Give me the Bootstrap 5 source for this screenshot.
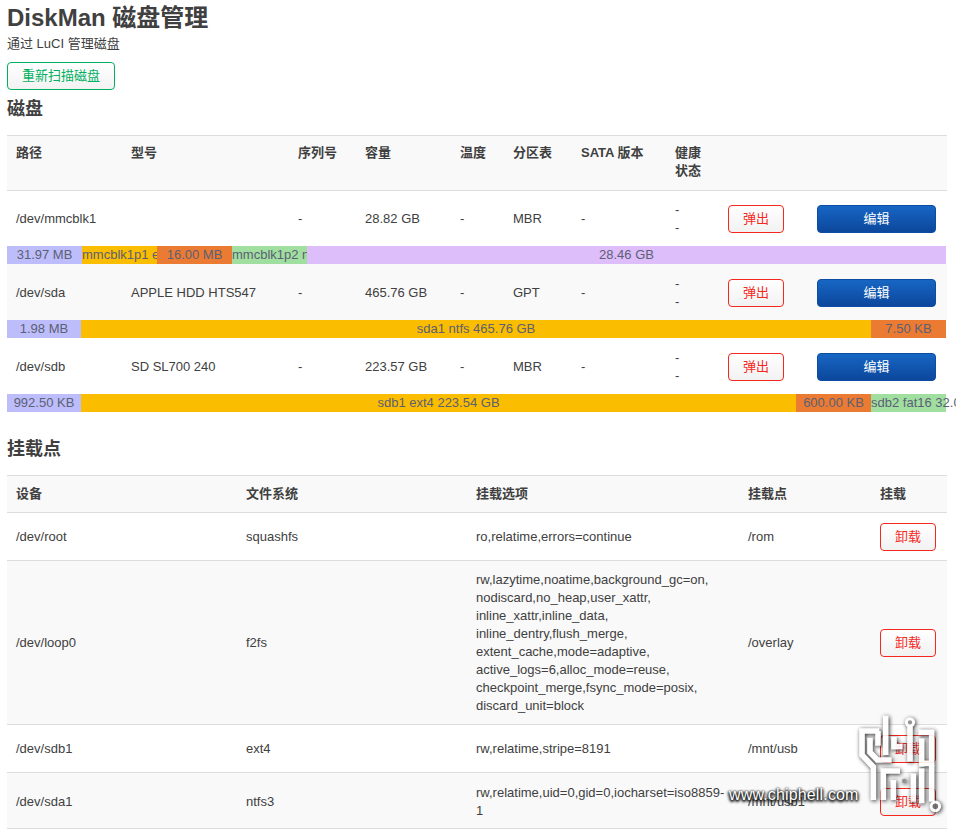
<!DOCTYPE html>
<html lang="zh-CN">
<head>
<meta charset="utf-8">
<title>DiskMan</title>
<link href="https://cdn.jsdelivr.net/npm/bootstrap@5.3.0/dist/css/bootstrap.min.css" rel="stylesheet">
<style>
html,body{overflow:hidden;height:829px}
body{font-family:"Liberation Sans","Noto Sans CJK SC",sans-serif;font-size:13px;line-height:18px;color:#404040;background:#fff;padding:0 9px 0 7px;position:relative}
.pg-title{font-size:24px;line-height:30px;font-weight:700;margin:0;padding-top:3px}
.pg-desc{margin:0;padding-top:1px;line-height:19px}
.act-btn{font-size:13px;line-height:18px;padding:4px 13px;border-radius:4px;background:linear-gradient(#fff,#f2f2f2);font-family:inherit}
.rescan{display:block;margin-top:9px;width:108px;height:28px;padding:0;border:1px solid #00b060;color:#00b060}
.sec-title{font-size:18px;line-height:22px;font-weight:700;margin:0}
.first-sec{margin-top:8px}
.second-sec{margin-top:26px}
.dt{table-layout:fixed;width:940px;margin:0;border-collapse:collapse;color:#404040;--bs-table-bg:transparent;font-size:13px;line-height:18px}
.dt th,.dt td{padding:9px 9px;border:0;border-top:1px solid #ddd;vertical-align:middle;font-weight:400;box-shadow:none;background:transparent;color:#404040}
.dt th{font-weight:700;vertical-align:top;background:#f9f9f9}
.dt tr.alt>td{background:#f9f9f9}
.disk-tbl{margin-top:15px}
.disk-tbl thead tr{height:55px}
.disk-tbl tbody tr.drow{height:55px}
.disk-tbl thead th{padding-top:8px;padding-bottom:10px}
.disk-tbl tr.drow td{border-top:1px solid #ddd;padding-top:10px;padding-bottom:8px}
.disk-tbl tr.barrow td{padding:0;border:0;height:18px}
.disk-tbl tr.barrow+tr.drow td{border-top:0}
.disk-tbl tr.barrow+tr.drow{height:56px}
.seg-bar{display:flex;width:939px;height:18px;line-height:18px}
.seg{flex:none;text-align:center;white-space:nowrap;position:relative}
.seg-blue{background:#bdbdfb}.seg-yel{background:#fbbd00}.seg-org{background:#eb7b33}.seg-grn{background:#a0dfa0}.seg-pur{background:#debdfb}
.seg-bar .seg{color:#5c6074}
.seg-nar{width:75px}
.eject{display:block;width:56px;height:28px;padding:0;border:1px solid #f5281e;color:#f5281e}
.edit{display:block;width:119px;height:28px;padding:0;border:1px solid #0d4ca3;color:#fff;background:linear-gradient(#1766c4,#0c479c)}
.mnt-tbl{margin-top:15px}
.mnt-tbl th{vertical-align:middle;padding-top:9px;padding-bottom:9px}
.mnt-tbl tbody td{padding-top:10px;padding-bottom:8px}
.mnt-tbl tr.mnt-2>td{border-bottom:1px solid #ddd;padding-top:10px;padding-bottom:7px}
.mnt-h1{height:37px}.mnt-r{height:48px}.mnt-l{height:164px}.mnt-2{height:56px}
.wm{position:absolute;left:722px;top:705px;width:234px;height:124px;pointer-events:none}
.wm-txt{position:absolute;left:7px;top:81px;font-size:16px;line-height:18px;color:#fff;text-shadow:0 0 2px #111,1px 1px 3px #111,-1px 1px 3px #111,0 2px 3px #333;letter-spacing:.15px}
.wm svg{position:absolute;left:128px;top:0;filter:drop-shadow(1px 1px 2px rgba(0,0,0,.9))}
</style>
</head>
<body>
<h1 class="pg-title">DiskMan 磁盘管理</h1>
<p class="pg-desc">通过 LuCI 管理磁盘</p>
<button class="btn act-btn rescan" type="button">重新扫描磁盘</button>
<h2 class="sec-title first-sec">磁盘</h2>
<table class="table dt disk-tbl">
<colgroup><col style="width:115px"><col style="width:167px"><col style="width:67px"><col style="width:95px"><col style="width:53px"><col style="width:68px"><col style="width:94px"><col style="width:53px"><col style="width:89px"><col style="width:139px"></colgroup>
<thead><tr><th>路径</th><th>型号</th><th>序列号</th><th>容量</th><th>温度</th><th>分区表</th><th>SATA 版本</th><th>健康状态</th><th></th><th></th></tr></thead>
<tbody>
<tr class="drow"><td>/dev/mmcblk1</td><td></td><td>-</td><td>28.82 GB</td><td>-</td><td>MBR</td><td>-</td><td>-<br>-</td><td><button class="btn act-btn eject" type="button">弹出</button></td><td><button class="btn act-btn edit" type="button">编辑</button></td></tr>
<tr class="barrow"><td colspan="10"><div class="seg-bar"><div class="seg seg-nar seg-blue">31.97 MB</div><div class="seg seg-nar seg-yel">mmcblk1p1 ext4 31.97 MB</div><div class="seg seg-nar seg-org">16.00 MB</div><div class="seg seg-nar seg-grn">mmcblk1p2 ntfs 28.32 GB</div><div class="seg seg-pur" style="width:639px">28.46 GB</div></div></td></tr>
<tr class="drow alt"><td>/dev/sda</td><td>APPLE HDD HTS547</td><td>-</td><td>465.76 GB</td><td>-</td><td>GPT</td><td>-</td><td>-<br>-</td><td><button class="btn act-btn eject" type="button">弹出</button></td><td><button class="btn act-btn edit" type="button">编辑</button></td></tr>
<tr class="barrow"><td colspan="10"><div class="seg-bar"><div class="seg seg-blue" style="width:74px">1.98 MB</div><div class="seg seg-yel" style="width:790px">sda1 ntfs 465.76 GB</div><div class="seg seg-nar seg-org">7.50 KB</div></div></td></tr>
<tr class="drow"><td>/dev/sdb</td><td>SD SL700 240</td><td>-</td><td>223.57 GB</td><td>-</td><td>MBR</td><td>-</td><td>-<br>-</td><td><button class="btn act-btn eject" type="button">弹出</button></td><td><button class="btn act-btn edit" type="button">编辑</button></td></tr>
<tr class="barrow"><td colspan="10"><div class="seg-bar"><div class="seg seg-blue" style="width:74px">992.50 KB</div><div class="seg seg-yel" style="width:715px">sdb1 ext4 223.54 GB</div><div class="seg seg-nar seg-org">600.00 KB</div><div class="seg seg-nar seg-grn">sdb2 fat16 32.00 MB</div></div></td></tr>
</tbody>
</table>
<h2 class="sec-title second-sec">挂载点</h2>
<table class="table dt mnt-tbl">
<colgroup><col style="width:230px"><col style="width:230px"><col style="width:272px"><col style="width:132px"><col style="width:76px"></colgroup>
<thead><tr class="mnt-h1"><th>设备</th><th>文件系统</th><th>挂载选项</th><th>挂载点</th><th>挂载</th></tr></thead>
<tbody>
<tr class="mnt-r"><td>/dev/root</td><td>squashfs</td><td>ro,relatime,errors=continue</td><td>/rom</td><td><button class="btn act-btn eject" type="button">卸载</button></td></tr>
<tr class="mnt-l alt"><td>/dev/loop0</td><td>f2fs</td><td>rw,lazytime,noatime,background_gc=on,<br>nodiscard,no_heap,user_xattr,<br>inline_xattr,inline_data,<br>inline_dentry,flush_merge,<br>extent_cache,mode=adaptive,<br>active_logs=6,alloc_mode=reuse,<br>checkpoint_merge,fsync_mode=posix,<br>discard_unit=block</td><td>/overlay</td><td><button class="btn act-btn eject" type="button">卸载</button></td></tr>
<tr class="mnt-r"><td>/dev/sdb1</td><td>ext4</td><td>rw,relatime,stripe=8191</td><td>/mnt/usb</td><td><button class="btn act-btn eject" type="button">卸载</button></td></tr>
<tr class="mnt-2 alt"><td>/dev/sda1</td><td>ntfs3</td><td>rw,relatime,uid=0,gid=0,iocharset=iso8859-<br>1</td><td>/mnt/usb1</td><td><button class="btn act-btn eject" type="button">卸载</button></td></tr>
</tbody>
</table>
<div class="wm">
<svg width="100" height="120" viewBox="0 0 300 360" fill="none" stroke="#fff" stroke-width="17" opacity=".9">
<path d="M88 78H36V150L70 186V285"/>
<path d="M60 98V142L82 165H125M84 78V122"/>
<path d="M107 32V150"/>
<path d="M180 66V170"/>
<circle cx="180" cy="52" r="11" fill="#888" stroke-width="9"/>
<path d="M132 95V125H158"/>
<path d="M205 82H245V175H218"/>
<path d="M215 100V185"/>
<path d="M100 285V198H150"/>
<path d="M130 225V285"/>
<circle cx="163" cy="228" r="7" fill="#888" stroke="none"/>
<path d="M190 205V290"/>
<path d="M245 180V290"/>
<path d="M215 190V295"/>
<circle cx="256" cy="304" r="13" fill="#666" stroke-width="9"/>
</svg>
<div class="wm-txt">www.chiphell.com</div>
</div>
</body>
</html>
